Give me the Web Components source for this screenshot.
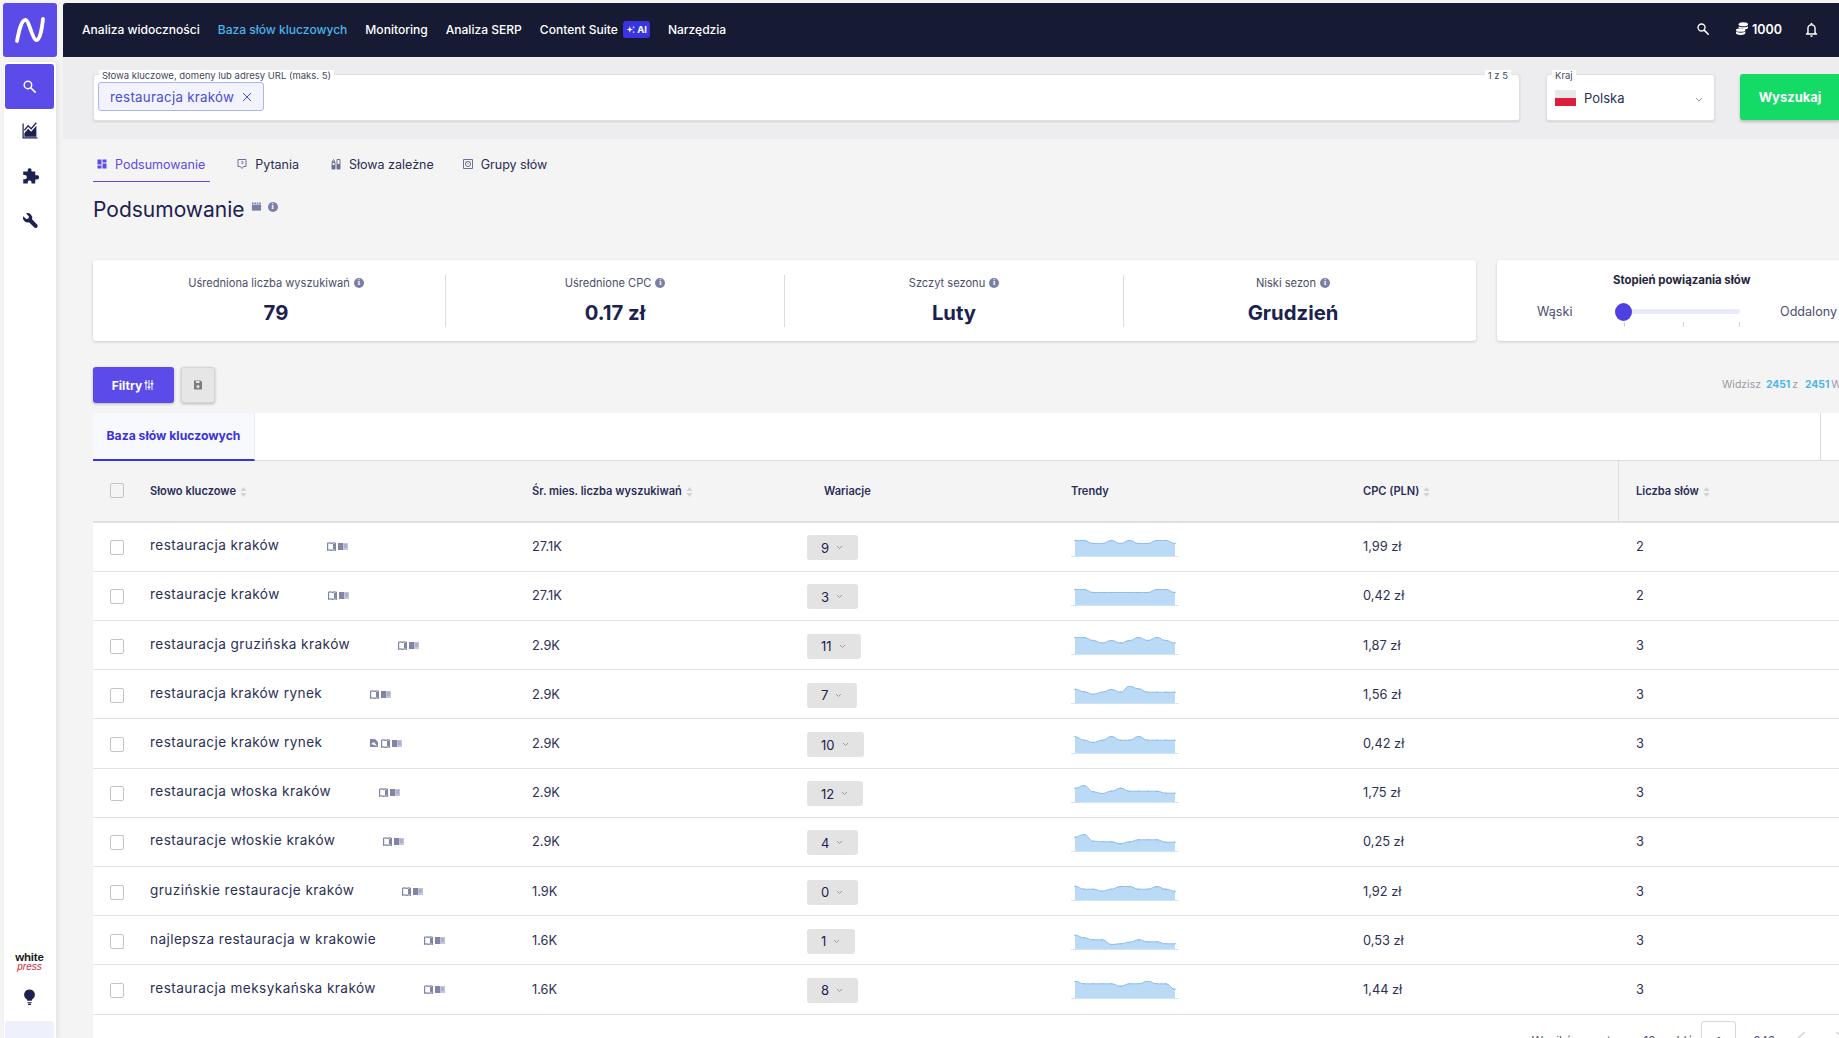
<!doctype html>
<html lang="pl">
<head>
<meta charset="utf-8">
<title>Baza słów kluczowych</title>
<style>
  html, body { margin: 0; height: 100%; overflow: hidden; background: #f4f4f4; }
  body { font-family: Inter, "Noto Sans", sans-serif; color: #1c2150; }
</style>
</head>
<body>
<app-shell></app-shell>
<script>
// small icon set, all drawn on a 24 box
const ICONS = {
  search: '<circle cx="9.500" cy="9.500" r="6" fill="none" stroke="currentColor" stroke-width="2.300"/><path d="M14 14l7 7" stroke="currentColor" stroke-width="2.800" stroke-linecap="round"/>',
  chart: '<path d="M2 2v20h20v-1.600H3.600V2z" fill="currentColor"/><path d="M4.500 19.500V15l5-6 4 4 7-8v14.500z" fill="currentColor"/><path d="M4.500 11l5-6 4 4 7-8" fill="none" stroke="currentColor" stroke-width="1.600"/>',
  puzzle: '<path d="M9 3.500a2.600 2.600 0 0 1 5 0V6h5v5h2.400a2.800 2.800 0 0 1 0 5.600H19V22h-5v-2a2.600 2.600 0 0 0-5 0v2H3v-5.600h2a2.800 2.800 0 0 0 0-5.600H3V6h6z" fill="currentColor"/>',
  wrench: '<path d="M4 6.500 8 10l2.600-.6.8-2.600L7.600 3a6 6 0 0 1 7.600 7.400l6.400 6.600a2.600 2.600 0 0 1-3.800 3.600l-6.400-6.500A6 6 0 0 1 4 6.500z" fill="currentColor"/>',
  bulb: '<path d="M12 2a7.500 7.500 0 0 1 4.400 13.600c-.8.600-1.200 1.400-1.300 2.400H8.900c-.1-1-.5-1.800-1.300-2.400A7.500 7.500 0 0 1 12 2z" fill="currentColor"/><path d="M9 20h6v1.400H9zM10 22.400h4V24h-4z" fill="currentColor"/>',
  bell: '<path d="M12 2.500c.8 0 1.300.6 1.300 1.300v.7A6 6 0 0 1 18 10.400V16l2 2.400v1H4v-1L6 16v-5.600A6 6 0 0 1 10.700 4.500v-.7c0-.7.5-1.300 1.300-1.300zM8 17.400h8v-7a4 4 0 0 0-8 0z" fill="currentColor"/><path d="M10 20.500h4a2 2 0 0 1-4 0z" fill="currentColor"/>',
  coins: '<ellipse cx="14" cy="5" rx="7" ry="3" fill="currentColor"/><path d="M7 7.500c1 1.500 3 2 7 2s6-.5 7-2v2.500c0 1.500-3 2.500-5 2.700C15 11.800 12 11 9.500 11 8 10.900 7 10.500 7 10z" fill="currentColor"/><ellipse cx="10" cy="13.500" rx="7" ry="2.800" fill="currentColor"/><path d="M3 15.500c1 1.300 3 2 7 2s6-.7 7-2V18c0 1.800-3 3-7 3s-7-1.200-7-3z" fill="currentColor"/>',
  grid: '<path d="M3 3h8v10H3zM13 3h8v6h-8zM13 11h8v10h-8zM3 15h8v6H3z" fill="currentColor"/>',
  question: '<path d="M4 3h16v14h-5l-3 4-3-4H4z" fill="none" stroke="currentColor" stroke-width="2"/><path d="M10 7.500h4v3h-2v2" fill="none" stroke="currentColor" stroke-width="1.600"/>',
  tree: '<path d="M4 9h6v13H4zM7 3l3 5H4zM14 3h6v19h-6z" fill="none" stroke="currentColor" stroke-width="2"/><path d="M4 14h6v8H4zM14 12h6v10h-6z" fill="currentColor"/>',
  group: '<path d="M3 3h18v18H3z" fill="none" stroke="currentColor" stroke-width="2"/><circle cx="12" cy="12" r="5" fill="none" stroke="currentColor" stroke-width="2"/><path d="M7 7l4 4M17 7l-4 4" stroke="currentColor" stroke-width="1.500"/>',
  film: '<path d="M2 8h20v13H2z" fill="currentColor"/><path d="M2 3h3.500v4H2zM7.300 3h3.500v4H7.300zM12.600 3h3.500v4h-3.500zM18 3h3.500v4H18z" fill="currentColor"/>',
  save: '<path d="M4 3h13l3 3v15H4z" fill="currentColor"/><path d="M8 4h7v4H8z" fill="#e6e6e6"/><circle cx="12" cy="15" r="3" fill="#e6e6e6"/>',
  sliders: '<path d="M5 2h2v20H5zM11 2h2v20h-2zM17 2h2v20h-2z" fill="currentColor"/><path d="M3 6h6v3H3zM9 15h6v3H9zM15 8h6v3h-6z" fill="currentColor"/>',
  sparkle: '<path d="M9 4l1.800 6.200L17 12l-6.200 1.800L9 20l-1.800-6.200L1 12l6.200-1.800zM18 3l.8 2.700 2.700.8-2.700.8-.8 2.700-.8-2.700-2.700-.8 2.700-.8zM18 15l.8 2.200 2.200.8-2.200.8-.8 2.200-.8-2.200-2.200-.8 2.200-.8z" fill="currentColor"/>'
};
const icon = (name, size) => `<svg width="${size}" height="${size}" viewBox="0 0 24 24" aria-hidden="true">${ICONS[name]}</svg>`;

class BaseElement extends HTMLElement {
  constructor() {
    super();
    this.attachShadow({ mode: "open" });
  }
  getTemplate() {
    const template = document.createElement("template");
    template.innerHTML = `<style>${this.getStyles()}</style>${this.getMarkup()}`;
    return template;
  }
  connectedCallback() {
    if (!this.shadowRoot.firstChild) {
      this.shadowRoot.appendChild(this.getTemplate().content.cloneNode(true));
    }
  }
}

class InfoDot extends BaseElement {
  getStyles() {
    return `:host{display:inline-flex;width:10px;height:10px;border-radius:50%;background:#7a7fa6;color:#fff;
      align-items:center;justify-content:center;font:700 8px/1 "Liberation Serif",serif;vertical-align:1px}`;
  }
  getMarkup() { return `i`; }
}

class SideBar extends BaseElement {
  getStyles() {
    return `
      :host{display:flex;flex-direction:column;width:60px;flex:none;height:1038px;box-sizing:border-box;padding:3px 0 0 3px}
      .logo{width:54px;height:54px;border-radius:3px;background:#5b4be8;color:#fff;display:flex;align-items:center;justify-content:center}
      .rail{margin:5px 0 0 1px;width:52px;flex:1;background:#fff;border-radius:3px 3px 0 0;box-shadow:2px 0 5px rgba(0,0,0,.08);
        display:flex;flex-direction:column;align-items:flex-start;padding:2px 0 0 1px;box-sizing:border-box}
      .item{width:49px;height:45px;display:flex;align-items:center;justify-content:center;color:#1c2150;border-radius:3px;flex:none}
      .item.on{background:#5b4be8;color:#fff}
      .item.on + .item{margin-top:-1px}
      .brand{margin-top:auto;width:49px;font-family:"Liberation Sans",sans-serif;text-align:center;padding-bottom:17px}
      .brand b{display:block;font-size:11.500px;line-height:9px;color:#1b1b1b;letter-spacing:-.2px}
      .brand i{display:block;font-size:10px;line-height:9px;color:#c9283e}
      .bulb{width:49px;display:flex;justify-content:center;color:#1c2150;height:18px;margin-bottom:15px}
      .foot{width:49px;height:17px;background:#eef0fc;border-radius:3px 3px 0 0}
    `;
  }
  getMarkup() {
    return `
      <div class="logo"><svg width="34" height="30" viewBox="0 0 34 30"><path d="M4 26C6 16 8 6 12 5c4-1 7 19 11 20 4 1 6-12 7-21" fill="none" stroke="currentColor" stroke-width="3.800" stroke-linecap="round"/></svg></div>
      <nav class="rail">
        <div class="item on">${icon("search", 15)}</div>
        <div class="item">${icon("chart", 18)}</div>
        <div class="item">${icon("puzzle", 18)}</div>
        <div class="item">${icon("wrench", 19)}</div>
        <div class="brand"><b>white</b><i>press</i></div>
        <div class="bulb">${icon("bulb", 17)}</div>
        <div class="foot"></div>
      </nav>`;
  }
}

class NavBar extends BaseElement {
  getStyles() {
    return `
      :host{display:flex;align-items:center;height:54px;margin-top:3px;background:#161b33;color:#fff;border-radius:3px 0 0 0;
        padding:0 19px 2px 19px;box-sizing:border-box;font-size:12.050px;font-weight:500;gap:18px;flex:none}
      .on{color:#4db4ea}
      .ai{display:inline-flex;align-items:center;gap:1px;background:#3a34e0;border-radius:3px;font-size:9.500px;font-weight:700;height:17px;padding:0 3px;margin-left:5px;width:27px;box-sizing:border-box;justify-content:center}
      .suite{display:flex;align-items:center}
      .end{margin-left:auto;display:flex;align-items:center;font-weight:600;font-size:12.500px}
      .coins{display:flex;align-items:center;gap:2px;margin:0 21px 0 24px}
      svg{display:block}
    `;
  }
  getMarkup() {
    return `
      <span>Analiza widoczności</span>
      <span class="on">Baza słów kluczowych</span>
      <span>Monitoring</span>
      <span>Analiza SERP</span>
      <span class="suite">Content Suite<span class="ai">${icon("sparkle", 11)}AI</span></span>
      <span>Narzędzia</span>
      <div class="end">
        ${icon("search", 14)}
        <span class="coins">${icon("coins", 16)}1000</span>
        ${icon("bell", 17)}
      </div>`;
  }
}

class KeywordChip extends BaseElement {
  getStyles() {
    return `
      :host{display:inline-flex;align-items:center;gap:8px;height:29px;box-sizing:border-box;padding:0 11px;background:#f2f3fe;
        border:1px solid #aab4f0;border-radius:3px;color:#4a4fd0;font-size:13.300px;letter-spacing:.28px}
      svg{display:block}
    `;
  }
  getMarkup() {
    return `<slot></slot><svg width="10" height="10" viewBox="0 0 10 10"><path d="M1 1l8 8M9 1l-8 8" stroke="#4a4fd0" stroke-width="1"/></svg>`;
  }
}

class FieldBox extends BaseElement {
  getStyles() {
    return `
      :host{display:block;position:relative;height:47px;box-sizing:border-box;background:#fff;border:1px solid #e0e0e2;border-radius:3px;
        box-shadow:0 1px 2px rgba(0,0,0,.12);padding:7px 4px 0}
      .legend,.count{position:absolute;top:-5px;background:#fff;font-size:9.500px;line-height:11px;color:#45485f;padding:0 3px}
      .legend{left:5px}
      .count{right:8px}
    `;
  }
  getMarkup() {
    const count = this.getAttribute("count");
    return `<span class="legend">${this.getAttribute("legend")}</span>${count ? `<span class="count">${count}</span>` : ""}<slot></slot>`;
  }
}

class SearchBand extends BaseElement {
  getStyles() {
    return `
      :host{display:flex;height:82px;background:#ededf0;padding:17px 0 0 30px;box-sizing:border-box;flex:none;gap:26px;align-items:flex-start}
      .grow{width:1427px;flex:none}
      .kraj{width:169px;flex:none}
      .poland{display:flex;align-items:center;gap:8px;padding-left:4px;font-size:13px;color:#2b2f55;position:relative;height:22px;margin-top:5px}
      .flag{width:21px;height:16px;background:linear-gradient(#e8e8e8 50%,#dc1f3f 50%);flex:none}
      .chev{position:absolute;right:7px;top:10px}
      button{all:unset;flex:none;width:100px;height:46px;margin-left:-1px;background:#14da66;color:#fff;font-size:13px;font-weight:700;text-align:center;
        border-radius:3px 0 0 3px;box-shadow:0 2px 3px rgba(0,0,0,.2);box-sizing:border-box;line-height:46px}
    `;
  }
  getMarkup() {
    return `
      <field-box class="grow" legend="Słowa kluczowe, domeny lub adresy URL (maks. 5)" count="1 z 5"><keyword-chip>restauracja kraków</keyword-chip></field-box>
      <field-box class="kraj" legend="Kraj">
        <div class="poland"><span class="flag"></span>Polska
          <svg class="chev" width="8" height="5" viewBox="0 0 8 5"><path d="M1 1l3 3 3-3" fill="none" stroke="#999" stroke-width="1"/></svg>
        </div>
      </field-box>
      <button>Wyszukaj</button>`;
  }
}

class TabStrip extends BaseElement {
  getStyles() {
    return `
      :host{display:flex;align-items:flex-start;height:43px;margin:0 0 0 30px;flex:none;font-size:12.500px;color:#2a2e52;box-sizing:border-box}
      .tab{display:flex;align-items:center;gap:7px;height:43px;box-sizing:border-box;padding:8px 3px 0 3px;margin-right:23px}
      .tab svg{color:#6c7096;display:block;margin-top:-1px}
      .on{color:#5b4be8;border-bottom:1px solid #5b4be8;padding-right:5px}
      .on svg{color:#5b4be8}
      .wide{margin-right:25px}
      .tight{margin-right:22px}
    `;
  }
  getMarkup() {
    return `
      <div class="tab on">${icon("grid", 12)}Podsumowanie</div>
      <div class="tab wide">${icon("question", 12)}Pytania</div>
      <div class="tab tight">${icon("tree", 12)}Słowa zależne</div>
      <div class="tab">${icon("group", 12)}Grupy słów</div>`;
  }
}

class PageTitle extends BaseElement {
  getStyles() {
    return `
      :host{display:flex;align-items:center;gap:6px;margin:14px 0 0 30px;height:27px;font-size:21px;color:#1c2150;flex:none}
      .marks{display:flex;gap:6px;align-items:center;margin-top:-6px;color:#7a7fa6}
      svg{display:block}
    `;
  }
  getMarkup() {
    return `<slot></slot><span class="marks">${icon("film", 11)}<info-dot></info-dot></span>`;
  }
}

class MetricCell extends BaseElement {
  getStyles() {
    return `
      :host{display:flex;flex-direction:column;align-items:center;flex:1 1 0;height:52px;justify-content:flex-start;border-left:1px solid #dcdcdf;box-sizing:border-box}
      :host(:first-child){border-left:0}
      .label{font-size:11.100px;line-height:16px;color:#4b4e6c;display:flex;gap:4px;align-items:center}
      .value{font-size:20.300px;font-weight:700;margin-top:9px;line-height:26px;color:#1c2150}
    `;
  }
  getMarkup() {
    return `<div class="label">${this.getAttribute("label")}<info-dot></info-dot></div><div class="value"><slot></slot></div>`;
  }
}

class MetricRow extends BaseElement {
  getStyles() {
    return `
      :host{display:flex;margin:37px 0 0 30px;gap:21px;height:81px;flex:none;width:1780px}
      .card{background:#fff;border-radius:3px;box-shadow:0 1px 3px rgba(0,0,0,.18);height:81px;box-sizing:border-box}
      .stats{width:1383px;flex:none;padding:15px 14px;display:flex}
      .assoc{width:380px;flex:none;padding:13px 0 0 40px;position:relative}
      h4{margin:0 0 0 76px;font-size:11.400px;line-height:15px;font-weight:700;color:#24263c;white-space:nowrap}
      .line{display:flex;align-items:center;margin-top:16px;font-size:12.600px;color:#4b4e6c;height:14px}
      .w{width:80px}
      .track{width:123px;height:5px;background:#e9ebfb;border-radius:3px;position:relative;margin-right:40px}
      .thumb{position:absolute;left:-2px;top:-6px;width:17px;height:18px;border-radius:50%;background:#5040e4}
      .tick{position:absolute;top:13px;width:1px;height:5px;background:#d4d4d8}
    `;
  }
  getMarkup() {
    return `
      <div class="card stats">
        <metric-cell label="Uśredniona liczba wyszukiwań">79</metric-cell>
        <metric-cell label="Uśrednione CPC">0.17 zł</metric-cell>
        <metric-cell label="Szczyt sezonu">Luty</metric-cell>
        <metric-cell label="Niski sezon">Grudzień</metric-cell>
      </div>
      <div class="card assoc">
        <h4>Stopień powiązania słów</h4>
        <div class="line"><span class="w">Wąski</span>
          <div class="track"><span class="thumb"></span><span class="tick" style="left:7px"></span><span class="tick" style="left:66px"></span><span class="tick" style="left:122px"></span></div>
          <span>Oddalony</span></div>
      </div>`;
  }
}

class FilterBar extends BaseElement {
  getStyles() {
    return `
      :host{display:flex;align-items:center;height:36px;margin:26px 0 10px 30px;flex:none;gap:7px;position:relative}
      .filter{width:81px;height:36px;background:#5b4be8;color:#fff;border-radius:3px;font-size:12px;font-weight:700;display:flex;align-items:center;justify-content:center;gap:1px;
        box-shadow:0 1px 3px rgba(0,0,0,.25)}
      .save{width:34px;height:36px;box-sizing:border-box;background:#e6e6e6;border:1px solid #d6d6d6;border-radius:3px;color:#7d7d7d;display:flex;align-items:center;justify-content:center;
        box-shadow:0 1px 3px rgba(0,0,0,.25)}
      .seen{margin-left:auto;font-size:10.500px;color:#9a9aa2;white-space:nowrap;width:117px;overflow:hidden;padding-bottom:2px}
      .seen b{color:#4db4ea;font-weight:700;font-size:10.300px;margin:0 2px 0 2px}
      .seen b + b{margin-left:4px}
      svg{display:block}
    `;
  }
  getMarkup() {
    return `
      <div class="filter">Filtry${icon("sliders", 12)}</div>
      <div class="save">${icon("save", 12)}</div>
      <div class="seen">Widzisz <b>2451</b>z <b>2451</b>Wyników</div>`;
  }
}

class ResultTabs extends BaseElement {
  getStyles() {
    return `
      :host{display:flex;height:48px;margin-left:30px;background:#fff;border-bottom:1px solid #dcdcdf;box-sizing:border-box;flex:none;position:relative}
      .on{width:162px;box-sizing:border-box;background:#f8f8ff;border-right:1px solid #ececf0;border-bottom:2px solid #3a34e0;margin-bottom:-1px;
        font-size:12.200px;font-weight:700;color:#3a34d8;display:flex;align-items:center;justify-content:center;padding-bottom:1px}
      .gap{margin-left:auto;margin-right:18px;border-left:1px solid #dcdcdf}
    `;
  }
  getMarkup() {
    return `<div class="on">Baza słów kluczowych</div><div class="gap"></div>`;
  }
}

class SparkLine extends BaseElement {
  getStyles() {
    return `:host{display:block;width:108px;height:18px} svg{display:block}`;
  }
  getMarkup() {
    const values = this.getAttribute("values").split(",").map(Number);
    const base = 17.500;
    const step = 100 / 11;
    const pts = values.map((v, i) => [4 + i * step, base - v]);
    // soft curve between the monthly points
    let curve = `M${pts[0][0]} ${pts[0][1]}`;
    for (let i = 1; i < pts.length; i++) {
      const a = pts[i - 1], b = pts[i];
      curve += `C${(a[0] + step / 2).toFixed(1)} ${a[1]} ${(b[0] - step / 2).toFixed(1)} ${b[1]} ${b[0].toFixed(1)} ${b[1]}`;
    }
    const dots = pts.map(p => `<circle cx="${p[0].toFixed(1)}" cy="${p[1]}" r=".8" fill="#8dbdec"/>`).join("");
    return `<svg width="108" height="19" viewBox="0 0 108 19">
      <path d="${curve}L104 ${base}L4 ${base}z" fill="#bbdaf6"/>
      <path d="${curve}" fill="none" stroke="#8dbdec" stroke-width="1"/>
      <path d="M0 ${base}H108" stroke="#cfe4f8" stroke-width="1"/>${dots}</svg>`;
  }
}

const COLUMNS = "grid-template-columns:57px 382px 292px 247px 292px 255px 1fr";

class TableHead extends BaseElement {
  getStyles() {
    return `
      :host{display:grid;${COLUMNS};height:61.700px;margin-left:30px;background:#f4f4f4;border-bottom:2px solid #e0e0e2;box-sizing:border-box;align-items:center;
        font-size:11.100px;font-weight:600;color:#2a2e58;flex:none}
      .box{width:14px;height:15px;margin-left:17px;border:1px solid #c4c4c8;border-radius:2px;box-sizing:border-box}
      span.c{display:flex;align-items:center;gap:4px;white-space:nowrap;height:100%}
      .last{border-left:1px solid #dcdcdf;padding-left:17px}
      svg{display:block;margin-top:3px}
    `;
  }
  getMarkup() {
    const sort = `<svg width="7" height="10" viewBox="0 0 7 10"><path d="M3.500 0l3 4H.5zM3.500 10l3-4H.5z" fill="#d2d2d8"/></svg>`;
    return `<span class="box"></span>
      <span class="c">Słowo kluczowe ${sort}</span>
      <span class="c">Śr. mies. liczba wyszukiwań ${sort}</span>
      <span class="c">Wariacje</span>
      <span class="c">Trendy</span>
      <span class="c">CPC (PLN) ${sort}</span>
      <span class="c last">Liczba słów ${sort}</span>`;
  }
}

class KeywordRow extends BaseElement {
  getStyles() {
    return `
      :host{display:grid;${COLUMNS};height:49.200px;margin-left:30px;background:#fff;border-bottom:1px solid #e2e2e4;box-sizing:border-box;align-items:center;
        font-size:12.800px;color:#2b2f55;flex:none}
      .box{width:14px;height:15px;margin:2px 0 0 17px;border:1px solid #c4c4c8;border-radius:2px;box-sizing:border-box}
      .kw{display:flex;align-items:center;font-size:13.600px;letter-spacing:.42px;margin-top:-3px;white-space:nowrap}
      .marks{display:flex;align-items:center;gap:2px;margin-left:48px;color:#7f84a8;margin-top:3px}
      .pill{display:inline-flex;align-items:center;height:25px;background:#e3e3e3;border-radius:3px;margin-left:-17px;box-sizing:border-box;padding:0 15px 0 14px;gap:7px;
        justify-self:start;font-size:13px;color:#1c2150;margin-top:2px}
      .trend{margin-top:2px}
      .last{padding-left:18px}
      svg{display:block}
    `;
  }
  getMarkup() {
    const g = n => this.getAttribute(n);
    const book = `<svg width="9" height="9" viewBox="0 0 9 9"><path d="M.6 1.200C2 .6 3 .6 4.500 1.400 6 .6 7 .6 8.400 1.200v7C7 7.600 6 7.600 4.500 8.400 3 7.600 2 7.600 .6 8.200z" fill="#fff" stroke="currentColor" stroke-width="1.200"/><path d="M6 2h2v5H6z" fill="currentColor"/></svg>`;
    const page = `<svg width="10" height="9" viewBox="0 0 10 9"><path d="M0 1h5v7H0z" fill="currentColor"/><path d="M5 1h5v7H5z" fill="#c3c6da"/><path d="M6 3h3M6 5h3" stroke="#8d91b0" stroke-width=".8"/></svg>`;
    const pin = `<svg width="9" height="9" viewBox="0 0 9 9"><path d="M0 0h5l3 3v5H0z" fill="currentColor"/><path d="M1 5l3-2 3 4z" fill="#fff"/></svg>`;
    return `<span class="box"></span>
      <span class="kw"><slot></slot><span class="marks">${g("extra") !== null ? pin : ""}${book}${page}</span></span>
      <span>${g("vol")}</span>
      <span class="pill">${g("var")}<svg width="7" height="5" viewBox="0 0 7 5"><path d="M1 1l2.500 2.500L6 1" fill="none" stroke="#9a9aa2" stroke-width="1"/></svg></span>
      <span class="trend"><spark-line values="${g("trend")}"></spark-line></span>
      <span>${g("cpc")}</span>
      <span class="last">${g("n")}</span>`;
  }
}

class TableFoot extends BaseElement {
  getStyles() {
    return `
      :host{display:flex;margin-left:30px;background:#fff;height:40px;box-sizing:border-box;padding:6px 0 0 0;justify-content:flex-end;font-size:11.500px;color:#4b4e6c}
      span{margin-top:13px;white-space:nowrap}
      .page{width:35px;height:30px;border:1px solid #d8d8dc;border-radius:3px;box-sizing:border-box;text-align:center;padding-top:13px;margin:0 8px}
      .ten{margin:13px 21px 0 5px}
      svg{display:block;margin-top:10px;flex:none}
      .a1{margin:10px 27px 0 19px}
      .a2{margin-right:-8px}
    `;
  }
  getMarkup() {
    const chev = (cls, d) => `<svg class="${cls}" width="13" height="14" viewBox="0 0 13 14"><path d="${d}" fill="none" stroke="#d4d4d8" stroke-width="1.500"/></svg>`;
    return `<span>Wyników na stronę:</span><span class="ten">10</span><span>Idź</span><div class="page">1</div><span>z 246</span>
      ${chev("a1", "M11 1 4 7l7 6")}${chev("a2", "M2 1l7 6-7 6")}`;
  }
}

const ROWS = [
  ["restauracja kraków", "27.1K", 9, "16,16,13,13,16,13,16,13,13,16,16,13", "1,99 zł", 2],
  ["restauracje kraków", "27.1K", 3, "16,16,13,13,13,13,13,13,13,16,16,13", "0,42 zł", 2],
  ["restauracja gruzińska kraków", "2.9K", 11, "17,17,14,11.500,14,11.500,14,17,14,17,14,11.500", "1,87 zł", 3],
  ["restauracja kraków rynek", "2.9K", 7, "14.300,11.700,9.300,11.300,14,11.300,17.300,14.700,11.300,11.300,11.300,11.300", "1,56 zł", 3],
  ["restauracje kraków rynek", "2.9K", 10, "16.700,13.300,11,13.300,17,13.300,13.300,17,13.300,13.300,13.300,13.300", "0,42 zł", 3, true],
  ["restauracja włoska kraków", "2.9K", 12, "14.300,17,10.700,9,11.300,14.300,11.300,11.300,11.300,11.300,9.300,9.300", "1,75 zł", 3],
  ["restauracje włoskie kraków", "2.9K", 4, "14.300,17,10.300,9.700,9.700,7.700,9.700,11.700,11.700,11.700,9.300,9.300", "0,25 zł", 3],
  ["gruzińskie restauracje kraków", "1.9K", 0, "14.300,11.300,11.300,9.300,11.300,14,14,11.300,11.300,14,11.300,9.300", "1,92 zł", 3],
  ["najlepsza restauracja w krakowie", "1.6K", 1, "14.300,11.700,9.700,9.700,5,5.700,7.300,9.700,7.700,7.700,5.700,5.700", "0,53 zł", 3],
  ["restauracja meksykańska kraków", "1.6K", 8, "17.300,14.700,14.700,14.700,14.700,12.300,14.700,14.700,17.300,14.700,14.700,9.300", "1,44 zł", 3]
];

class KeywordTable extends BaseElement {
  getStyles() {
    return `:host{display:flex;flex-direction:column;flex:none}`;
  }
  getMarkup() {
    const rows = ROWS.map(r => `<keyword-row vol="${r[1]}" var="${r[2]}" trend="${r[3]}" cpc="${r[4]}" n="${r[5]}"${r[6] ? " extra" : ""}>${r[0]}</keyword-row>`).join("");
    return `<result-tabs></result-tabs><table-head></table-head>${rows}<table-foot></table-foot>`;
  }
}

class AppShell extends BaseElement {
  getStyles() {
    return `
      :host{display:flex;width:1839px;height:1038px;overflow:hidden}
      main{flex:1;min-width:0;display:flex;flex-direction:column;overflow:hidden;margin-left:3px}
    `;
  }
  getMarkup() {
    return `
      <side-bar></side-bar>
      <main>
        <nav-bar></nav-bar>
        <search-band></search-band>
        <tab-strip></tab-strip>
        <page-title>Podsumowanie</page-title>
        <metric-row></metric-row>
        <filter-bar></filter-bar>
        <keyword-table></keyword-table>
      </main>`;
  }
}

customElements.define("info-dot", InfoDot);
customElements.define("side-bar", SideBar);
customElements.define("nav-bar", NavBar);
customElements.define("keyword-chip", KeywordChip);
customElements.define("field-box", FieldBox);
customElements.define("search-band", SearchBand);
customElements.define("tab-strip", TabStrip);
customElements.define("page-title", PageTitle);
customElements.define("metric-cell", MetricCell);
customElements.define("metric-row", MetricRow);
customElements.define("filter-bar", FilterBar);
customElements.define("result-tabs", ResultTabs);
customElements.define("spark-line", SparkLine);
customElements.define("table-head", TableHead);
customElements.define("keyword-row", KeywordRow);
customElements.define("table-foot", TableFoot);
customElements.define("keyword-table", KeywordTable);
customElements.define("app-shell", AppShell);
</script>
</body>
</html>
